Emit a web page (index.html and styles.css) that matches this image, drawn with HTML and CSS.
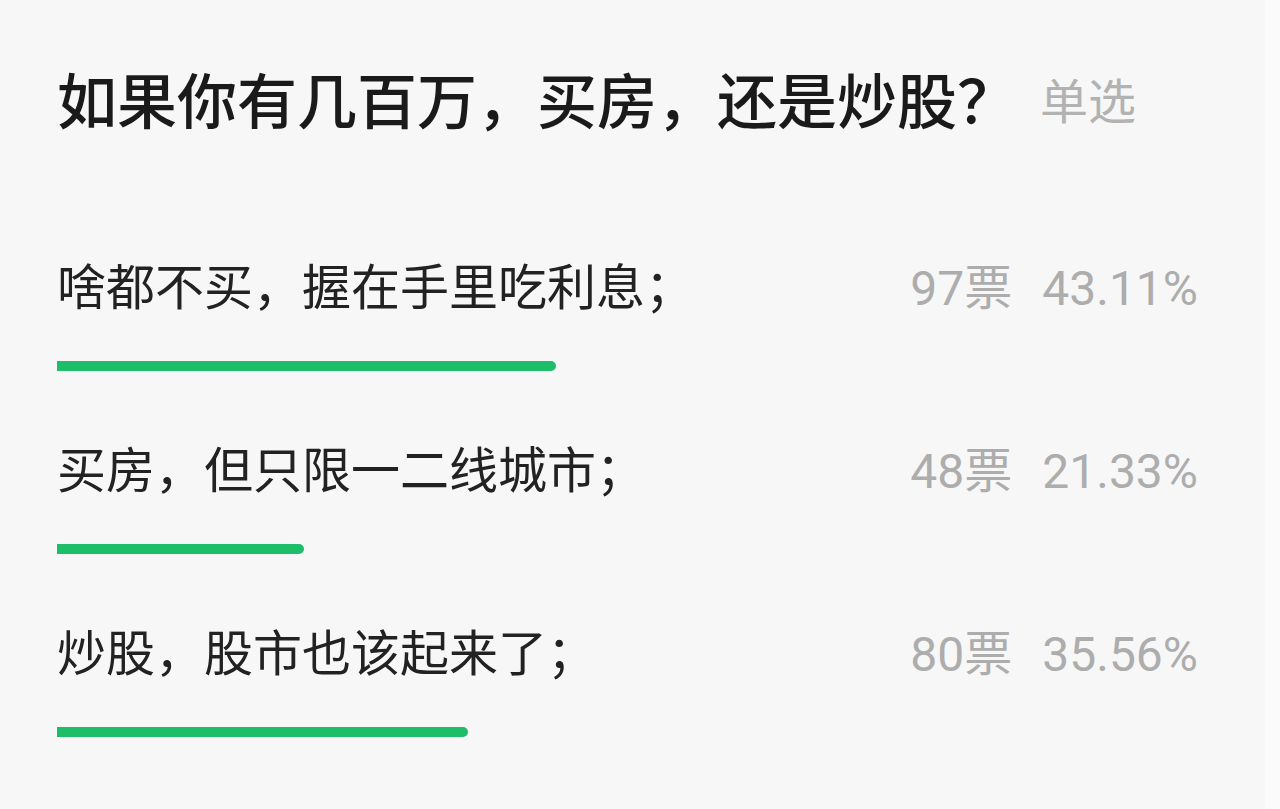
FILE: index.html
```html
<!DOCTYPE html>
<html lang="zh-CN">
<head>
    <meta charset="UTF-8">
    <meta name="viewport" content="width=device-width, initial-scale=1.0">
    <title>投票</title>
    <link rel="stylesheet" href="styles.css">
</head>
<body>
<div class="poll">
    <div class="poll-head">
        <div class="poll-title">如果你有几百万，买房，还是炒股？</div>
        <div class="poll-type">单选</div>
    </div>

    <div class="option">
        <div class="option-row">
            <div class="option-text">啥都不买，握在手里吃利息；</div>
            <div class="option-stats"><span class="votes">97票</span><span class="pct">43.11%</span></div>
        </div>
        <div class="bar-track"><div class="bar" style="width: 43.11%"></div></div>
    </div>

    <div class="option">
        <div class="option-row">
            <div class="option-text">买房，但只限一二线城市；</div>
            <div class="option-stats"><span class="votes">48票</span><span class="pct">21.33%</span></div>
        </div>
        <div class="bar-track"><div class="bar" style="width: 21.33%"></div></div>
    </div>

    <div class="option">
        <div class="option-row">
            <div class="option-text">炒股，股市也该起来了；</div>
            <div class="option-stats"><span class="votes">80票</span><span class="pct">35.56%</span></div>
        </div>
        <div class="bar-track"><div class="bar" style="width: 35.56%"></div></div>
    </div>
</div>
</body>
</html>
```

FILE: styles.css
```css
body {
    margin: 0;
    height: 100vh;
    overflow: hidden;
    background: #fbfbfb;
    font-family: "Noto Sans CJK SC", sans-serif;
}

.poll {
    width: 1265px;
    height: 100%;
    box-sizing: border-box;
    padding: 58px 67px 0 57px;
    background: #f7f7f7;
}

.poll-head {
    display: flex;
    align-items: center;
    height: 80px;
    line-height: 80px;
}

.poll-title {
    font-size: 60px;
    font-weight: 500;
    color: #1a1a1a;
}

.poll-type {
    margin-left: 23px;
    font-size: 48px;
    color: #b2b2b2;
}

.option {
    margin-top: 116px;
}

.option + .option {
    margin-top: 66px;
}

.option-row {
    display: flex;
    justify-content: space-between;
    align-items: baseline;
    height: 60px;
    line-height: 60px;
}

.option-text {
    font-size: 49px;
    color: #222;
}

.option-stats {
    font-family: Roboto, "Noto Sans CJK SC", sans-serif;
    font-size: 48px;
    color: #adadad;
}

.pct {
    margin-left: 30px;
}

.bar-track {
    width: 1157px;
    height: 10px;
    margin-top: 47px;
}

.bar {
    height: 100%;
    background: #1dbd6a;
    border-radius: 0 5px 5px 0;
}
```
